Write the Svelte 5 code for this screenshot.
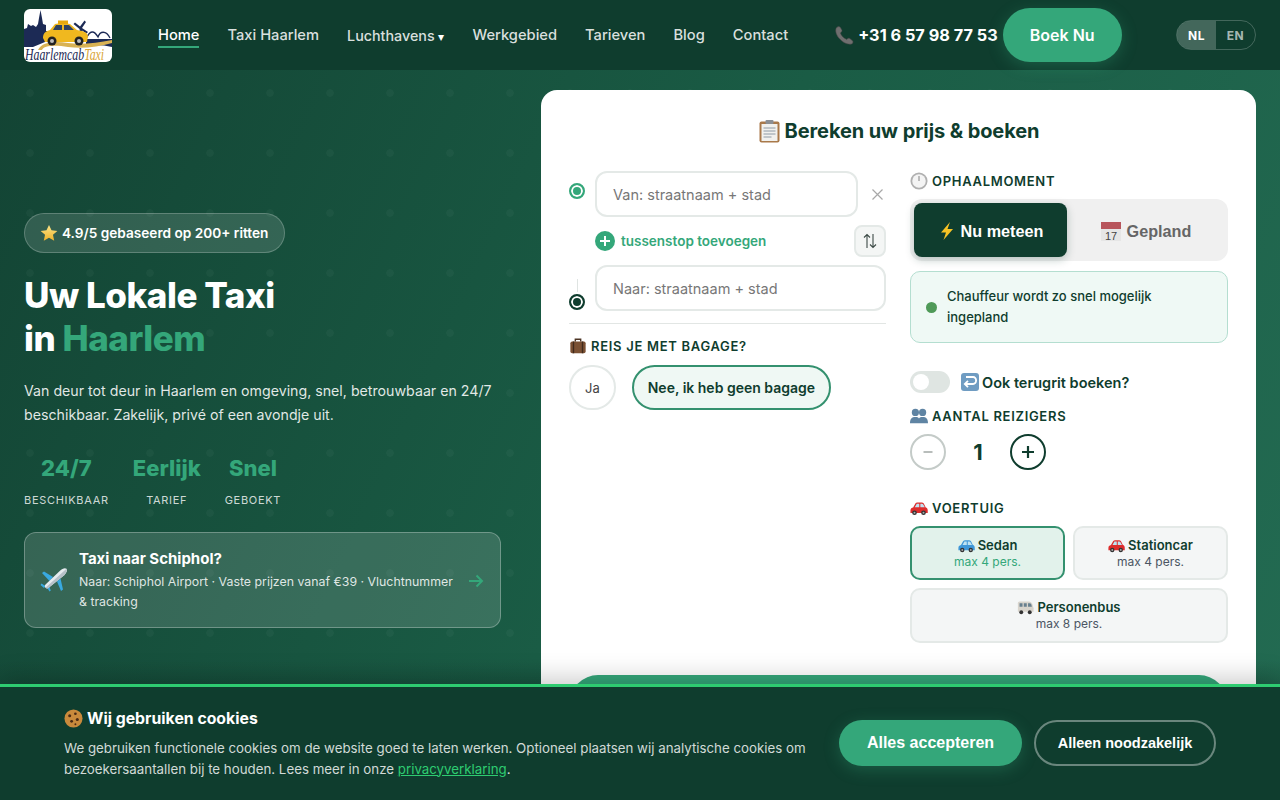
<script>
  const navLinks = ['Taxi Haarlem'];
  const navRest = ['Werkgebied', 'Tarieven', 'Blog', 'Contact'];
  const stats = [
    { value: '24/7', label: 'Beschikbaar' },
    { value: 'Eerlijk', label: 'Tarief' },
    { value: 'Snel', label: 'Geboekt' }
  ];
</script>

{#snippet carIcon(color, size = 18)}
  <svg class="emoji" width={size} height={size} viewBox="0 0 20 20">
    <path d="M.5 13c0-2 1-3 3-3.500L6 5c.5-.8 1.500-1.200 2.500-1.200h4.500c1 0 1.800.4 2.300 1.200L17.500 9.500c1.500.4 2.200 1.500 2.200 3v3H.5z" fill={color} />
    <path d="M7.500 5.300h2.800v4H5.300zM11.500 5.300h1.800c.5 0 .9.200 1.200.6l2 3.400h-5z" fill="#bfe3f2" />
    <circle cx="5" cy="15.300" r="2.600" fill="#333" /><circle cx="5" cy="15.300" r="1.100" fill="#aaa" />
    <circle cx="15" cy="15.300" r="2.600" fill="#333" /><circle cx="15" cy="15.300" r="1.100" fill="#aaa" />
  </svg>
{/snippet}

<div class="page">
  <header class="nav">
    <a class="logo" href="#home" aria-label="HaarlemcabTaxi">
      <svg width="88" height="53" viewBox="0 0 88 53">
        <rect width="88" height="53" fill="#fff" />
        <path d="M0 38V20l3-1 1-4 3 2 2-1 3 2 2-3 1-6 1.500-8L18 9l1 6 3 1v6h5v6l-6 5-12 5z" fill="#1c2a55" />
        <path d="M56.500 27l-1-7-6-5 1.500-1.500 5 4 4.500-6 1.500 1.500-4 6 6 4-1.500 1.500-4.500-3 1 6z" fill="#1c2a55" />
        <path d="M62 30c4-9 8-9 12-2 2-6 8-7 12 1" fill="none" stroke="#1c2a55" stroke-width="1.300" />
        <path d="M62 30h26v8c-8-2-18-3-26-1z" fill="#1c2a55" />
        <path d="M14 41c4-8 16-9 30-7 14 2 28 0 44-3v3c-14 4-30 6-44 4-12-2-24-2-26 3z" fill="#d9b253" />
        <path d="M19 29c0-5 3-7 7-8l5-6c3-1 12-1 15 0l7 6c6 1 10 2 11 6l-1 6H21z" fill="#f0b81f" />
        <path d="M32 16h6v5h-9zM40 16h5l5 5H40z" fill="#30425f" />
        <rect x="34" y="11.500" width="10" height="3.500" fill="#e9a90d" />
        <circle cx="28" cy="32" r="4.500" fill="#222" /><circle cx="28" cy="32" r="2" fill="#bbb" />
        <circle cx="55" cy="32" r="4.500" fill="#222" /><circle cx="55" cy="32" r="2" fill="#bbb" />
        <text transform="translate(1 51) scale(.74 1)" class="logo-a">Haarlemcab<tspan class="logo-b">Taxi</tspan></text>
      </svg>
    </a>
    <nav class="links">
      <a class="active" href="#home">Home</a>
      {#each navLinks as link}<a href="#l">{link}</a>{/each}
      <a class="drop" href="#d">Luchthavens <span class="caret">▾</span></a>
      {#each navRest as link}<a href="#l">{link}</a>{/each}
    </nav>
    <a class="phone" href="#tel">
      <svg class="emoji" width="21" height="21" viewBox="0 0 20 20">
        <path d="M2 3c1-1.500 3-2 4-.8l1.500 2.500c.4.800 0 1.600-.6 2.100l-.8.700c.8 2.500 3 5 6 6.200l1-.8c.6-.5 1.400-.5 2 0l2.500 2c1 1 .5 2.500-.8 3.200-4 1-8.600-1.600-11.800-5.300C2.500 10 .8 6 2 3z" fill="#6f6f6f" stroke="#444" stroke-width=".5" />
      </svg>
      +31 6 57 98 77 53
    </a>
    <button class="book">Boek Nu</button>
    <div class="lang"><span class="on">NL</span><span>EN</span></div>
  </header>

  <main class="hero">
    <section class="intro">
      <div class="badge">
        <svg class="emoji" width="18" height="18" viewBox="0 0 20 20">
          <defs><linearGradient id="star" x1="0" y1="0" x2="0" y2="1"><stop offset="0" stop-color="#fbe58a" /><stop offset="1" stop-color="#eeb32b" /></linearGradient></defs>
          <path d="M10 1l2.800 6 6.500.7-4.900 4.300 1.400 6.500L10 15.200 4.200 18.500l1.400-6.500L.7 7.700 7.200 7z" fill="url(#star)" />
        </svg>
        4.9/5 gebaseerd op 200+ ritten
      </div>
      <h1>Uw Lokale Taxi<br />in <em>Haarlem</em></h1>
      <p class="lead">Van deur tot deur in Haarlem en omgeving, snel, betrouwbaar en 24/7 beschikbaar. Zakelijk, privé of een avondje uit.</p>
      <div class="stats">
        {#each stats as stat}
          <div class="stat">
            <strong>{stat.value}</strong>
            <span>{stat.label}</span>
          </div>
        {/each}
      </div>
      <a class="promo" href="#schiphol">
        <svg class="plane" width="28" height="28" viewBox="0 0 28 28">
          <path d="M13 10 4 4.500 2 6l7.500 8zM17 14.500l4 9.500 2-1.500-2.500-11z" fill="#39a9e0" />
          <path d="M5.500 19 1.500 16.500.5 18l3.500 3zM7 20.500l2.500 4 1.300-1-2-5z" fill="#39a9e0" />
          <path d="M26.500 1.800c-1.500-1.300-4.500 0-6.500 2L5.500 17.500c-1 1-.8 2.500 0 3.300s2.200 1 3.200 0L24.500 8c2-2 3.200-4.800 2-6.200z" fill="#e6ebef" />
          <path d="M26.500 1.800c.8 1.300-.4 4.300-2 6.200L8.700 20.800c-1 1-2.400.8-3.200 0z" fill="#b6c0c8" />
        </svg>
        <div class="promo-text">
          <strong>Taxi naar Schiphol?</strong>
          <span>Naar: Schiphol Airport · Vaste prijzen vanaf €39 · Vluchtnummer &amp; tracking</span>
        </div>
        <svg class="arrow" width="16" height="16" viewBox="0 0 16 16"><path d="M1 8h13M8.500 2.500 14 8l-5.500 5.500" fill="none" stroke="#34a77a" stroke-width="2" /></svg>
      </a>
    </section>

    <section class="card">
      <h2>
        <svg class="emoji title-ico" width="23" height="24" viewBox="0 0 22 24">
          <rect x="1" y="2.500" width="20" height="21" rx="2" fill="#a9794a" />
          <rect x="3" y="5" width="16" height="17" fill="#f1f1ee" />
          <path d="M5 9h12M5 12h12M5 15h12M5 18h8" stroke="#8e9aa5" stroke-width="1" />
          <rect x="7" y="1" width="8" height="4" rx="1" fill="#8b8f94" />
        </svg>
        Bereken uw prijs &amp; boeken
      </h2>
      <div class="columns">
        <div class="col-left">
          <div class="route">
            <span class="pin start"></span>
            <input placeholder="Van: straatnaam + stad" />
            <button class="clear" aria-label="Wissen">
              <svg width="11" height="11" viewBox="0 0 11 11"><path d="M.5.500l10 10M10.500.500l-10 10" stroke="#a8a8a8" stroke-width="1.200" /></svg>
            </button>
          </div>
          <div class="route-mid">
            <span class="plus">
              <svg width="12" height="12" viewBox="0 0 12 12"><path d="M6 1v10M1 6h10" stroke="#fff" stroke-width="2" /></svg>
            </span>
            <span class="stop">tussenstop toevoegen</span>
            <button class="swap" aria-label="Omdraaien">
              <svg width="14" height="16" viewBox="0 0 14 16"><path d="M4 15V1.500M1 4.500l3-3 3 3M10 1v13.500M7 11.500l3 3 3-3" fill="none" stroke="#3c4a46" stroke-width="1.100" /></svg>
            </button>
          </div>
          <div class="route end">
            <span class="pin-wrap"><i></i><span class="pin finish"></span></span>
            <input placeholder="Naar: straatnaam + stad" />
          </div>
          <hr />
          <div class="label bag">
            <svg class="emoji" width="18" height="18" viewBox="0 0 20 20">
              <rect x="1.500" y="5" width="17" height="13" rx="2" fill="#7a5033" />
              <path d="M7 5V2.500h6V5" fill="none" stroke="#4c3424" stroke-width="1.500" />
              <path d="M5 5v13M15 5v13" stroke="#3f2a1c" stroke-width="1.500" />
            </svg>
            Reis je met bagage?
          </div>
          <div class="bag-options">
            <button class="opt">Ja</button>
            <button class="opt chosen">Nee, ik heb geen bagage</button>
          </div>
        </div>

        <div class="col-right">
          <div class="label">
            <svg class="emoji" width="18" height="18" viewBox="0 0 20 20">
              <circle cx="10" cy="10" r="9.500" fill="#b0b0b0" /><circle cx="10" cy="10" r="7.500" fill="#f4f4f4" />
              <path d="M10 4.500V10" stroke="#777" stroke-width="1" />
            </svg>
            Ophaalmoment
          </div>
          <div class="tabs">
            <button class="tab current">
              <svg class="emoji" width="18" height="20" viewBox="0 0 18 20"><path d="M12 1 3 11.500h5L5.500 19 15 8H9.500z" fill="#f7c325" /></svg>
              Nu meteen
            </button>
            <button class="tab">
              <svg class="emoji cal" width="22" height="22" viewBox="0 0 22 22">
                <rect x="1" y="2" width="20" height="19" fill="#e6e6e6" />
                <rect x="1" y="2" width="20" height="7" fill="#b8555c" />
                <text x="11" y="19.500" class="cal-n">17</text>
              </svg>
              Gepland
            </button>
          </div>
          <div class="notice">
            <span class="dot"></span>
            <span>Chauffeur wordt zo snel mogelijk ingepland</span>
          </div>
          <div class="return">
            <span class="switch"><b></b></span>
            <svg class="emoji" width="20" height="20" viewBox="0 0 20 20">
              <rect x="1" y="1" width="18" height="18" rx="3" fill="#6f9cc2" />
              <path d="M6 5h7a3 3 0 0 1 3 3.500A3 3 0 0 1 13 12H5M8 8.800 4.800 12 8 15.200" fill="none" stroke="#fff" stroke-width="1.800" />
            </svg>
            <span class="return-text">Ook terugrit boeken?</span>
          </div>
          <div class="label people">
            <svg class="emoji" width="18" height="18" viewBox="0 0 20 20">
              <g fill="#5f84a3"><circle cx="6" cy="6" r="4" /><circle cx="14" cy="6" r="4" /><path d="M0 18c0-5 2-7 6-7s5 2 5 7zM9 18c0-5 1-7 5-7s6 2 6 7z" /></g>
            </svg>
            Aantal reizigers
          </div>
          <div class="stepper">
            <button class="step off"><svg width="12" height="12" viewBox="0 0 12 12"><path d="M1.500 6h9" stroke="#b8bdbb" stroke-width="2" /></svg></button>
            <span class="count">1</span>
            <button class="step"><svg width="14" height="14" viewBox="0 0 14 14"><path d="M7 1v12M1 7h12" stroke="#0f3d2e" stroke-width="2.200" /></svg></button>
          </div>
          <div class="label vehicle-label">
            {@render carIcon('#dd2c2c')}
            Voertuig
          </div>
          <div class="vehicles">
            <button class="vehicle picked">
              <span class="v-name">{@render carIcon('#3f97d8', 17)} Sedan</span>
              <small>max 4 pers.</small>
            </button>
            <button class="vehicle">
              <span class="v-name">{@render carIcon('#dd2c2c', 17)} Stationcar</span>
              <small>max 4 pers.</small>
            </button>
            <button class="vehicle wide">
              <span class="v-name">
                <svg class="emoji" width="17" height="17" viewBox="0 0 20 20">
                  <path d="M1 5c0-1 1-2 2-2h11c2 0 3 1 4 3l1.500 5v4H1z" fill="#d8d4cc" />
                  <path d="M3 5h3.500v4H3zM8 5h3.500v4H8zM13 5h2c1 0 2 1 2 2l.5 2H13z" fill="#68808f" />
                  <circle cx="5" cy="15.500" r="2.300" fill="#333" /><circle cx="15" cy="15.500" r="2.300" fill="#333" />
                </svg>
                Personenbus
              </span>
              <small>max 8 pers.</small>
            </button>
          </div>
        </div>
      </div>
      <button class="submit">Bereken prijs</button>
    </section>
  </main>

  <aside class="cookies">
    <div class="cookie-text">
      <h3>
        <svg class="emoji" width="19" height="19" viewBox="0 0 20 20">
          <circle cx="10" cy="10" r="9.500" fill="#c98a3c" />
          <g fill="#4a2a14"><circle cx="6" cy="7" r="1.600" /><circle cx="12" cy="5" r="1.400" /><circle cx="14" cy="11" r="1.600" /><circle cx="8" cy="13" r="1.500" /><circle cx="12" cy="16" r="1" /></g>
        </svg>
        Wij gebruiken cookies
      </h3>
      <p>We gebruiken functionele cookies om de website goed te laten werken. Optioneel plaatsen wij analytische cookies om bezoekersaantallen bij te houden. Lees meer in onze <a href="#privacy">privacyverklaring</a>.</p>
    </div>
    <div class="cookie-actions">
      <button class="accept">Alles accepteren</button>
      <button class="necessary">Alleen noodzakelijk</button>
    </div>
  </aside>
</div>

<style>
  :global(body) {
    overflow: hidden;
    background: #0f3d2e;
  }

  .page {
    position: relative;
    height: 800px;
    overflow: hidden;
    font-family: Inter, "Liberation Sans", sans-serif;
    color: #0f3d2e;
  }
  button {
    font-family: inherit;
    cursor: pointer;
    padding: 0;
  }
  a {
    text-decoration: none;
    color: inherit;
  }
  .emoji {
    flex: none;
    vertical-align: -3px;
  }

  /* top bar */
  .nav {
    height: 70px;
    box-sizing: border-box;
    display: flex;
    align-items: center;
    padding: 0 24px;
    background: #0f3d2e;
  }
  .logo {
    display: block;
    width: 88px;
    height: 53px;
    border-radius: 6px;
    overflow: hidden;
    margin-right: 46px;
  }
  .logo svg {
    display: block;
  }
  .logo-a {
    font: italic 400 16px "Liberation Serif", serif;
    fill: #1c2a55;
  }
  .logo-b {
    fill: #d9a537;
  }
  .links {
    display: flex;
    align-items: center;
    gap: 28px;
    font-size: 14.700px;
    font-weight: 500;
    color: rgba(255, 255, 255, .85);
    height: 26px;
  }
  .links a {
    display: block;
    line-height: 22px;
    padding-top: 2px;
    border-bottom: 2px solid transparent;
    white-space: nowrap;
  }
  .links .active {
    color: #fff;
    border-bottom-color: #34a77a;
  }
  .links .drop {
    margin-top: 2px;
    font-size: 14.300px;
  }
  .caret {
    font-size: 12px;
    color: #fff;
  }
  .phone {
    margin-left: 46px;
    display: flex;
    align-items: center;
    gap: 3px;
    font-size: 16.300px;
    font-weight: 700;
    color: #fff;
    white-space: nowrap;
  }
  .book {
    margin-left: 5px;
    width: 119px;
    height: 54px;
    border: 0;
    border-radius: 27px;
    background: #34a77a;
    color: #fff;
    font-size: 16px;
    font-weight: 600;
    box-shadow: 0 4px 16px rgba(52, 167, 122, .3);
  }
  .lang {
    margin-left: auto;
    display: flex;
    width: 80px;
    height: 30px;
    box-sizing: border-box;
    border: 1px solid rgba(255, 255, 255, .22);
    border-radius: 15px;
    overflow: hidden;
    font-size: 12px;
    font-weight: 700;
    letter-spacing: .6px;
    color: rgba(255, 255, 255, .65);
  }
  .lang span {
    flex: 1;
    display: flex;
    align-items: center;
    justify-content: center;
  }
  .lang .on {
    background: rgba(255, 255, 255, .22);
    color: #fff;
  }

  /* hero */
  .hero {
    height: 730px;
    box-sizing: border-box;
    padding: 20px 24px 0;
    display: grid;
    grid-template-columns: 477px 715px;
    column-gap: 40px;
    background:
      radial-gradient(circle, rgba(255, 255, 255, .03) 3.500px, transparent 4px) 0 -7px / 60px 60px,
      linear-gradient(180deg, transparent 590px, rgba(15, 61, 46, .45) 640px),
      linear-gradient(115deg, #134434 0%, #1a5c45 50%, #236b52 100%);
  }
  .intro {
    height: 660px;
    display: flex;
    flex-direction: column;
    justify-content: center;
    align-items: flex-start;
    color: #fff;
  }
  .badge {
    height: 40px;
    box-sizing: border-box;
    display: flex;
    align-items: center;
    gap: 4px;
    padding: 0 16px 0 15px;
    border: 1px solid rgba(255, 255, 255, .22);
    border-radius: 20px;
    background: rgba(255, 255, 255, .13);
    font-size: 13.650px;
    font-weight: 600;
  }
  h1 {
    margin: 21px 0 0;
    font-size: 35px;
    line-height: 43px;
    font-weight: 800;
    letter-spacing: -.45px;
  }
  h1 em {
    font-style: normal;
    color: #34a77a;
  }
  .lead {
    margin: 19px 0 0;
    font-size: 14.200px;
    line-height: 24px;
    color: rgba(255, 255, 255, .88);
  }
  .stats {
    display: flex;
    gap: 24px;
    margin-top: 27px;
  }
  .stat {
    display: flex;
    flex-direction: column;
    align-items: center;
  }
  .stat strong {
    font-size: 22px;
    line-height: 28px;
    font-weight: 800;
    color: #34a77a;
  }
  .stat span {
    margin-top: 11px;
    font-size: 11px;
    line-height: 14px;
    letter-spacing: .7px;
    text-transform: uppercase;
    color: rgba(255, 255, 255, .8);
  }
  .promo {
    margin-top: 25px;
    width: 477px;
    height: 96px;
    box-sizing: border-box;
    display: flex;
    align-items: center;
    gap: 11px;
    padding: 2px 16px 0 15px;
    border: 1px solid rgba(255, 255, 255, .28);
    border-radius: 12px;
    background: rgba(255, 255, 255, .14);
  }
  .plane {
    flex: none;
  }
  .promo-text {
    flex: 1;
    display: flex;
    flex-direction: column;
  }
  .promo-text strong {
    font-size: 15px;
    line-height: 20px;
    font-weight: 700;
    margin-bottom: 3px;
  }
  .promo-text span {
    font-size: 12.350px;
    line-height: 20px;
    color: rgba(255, 255, 255, .85);
  }
  .arrow {
    flex: none;
  }

  /* booking card */
  .card {
    height: 700px;
    box-sizing: border-box;
    padding: 28px 28px 0;
    border-radius: 16px;
    background: #fff;
  }
  h2 {
    margin: 0;
    height: 26px;
    display: flex;
    align-items: center;
    justify-content: center;
    gap: 4px;
    font-size: 20px;
    font-weight: 700;
    letter-spacing: -.1px;
  }
  .columns {
    margin-top: 27px;
    display: grid;
    grid-template-columns: 317px 318px;
    column-gap: 24px;
  }
  .route {
    display: flex;
    align-items: flex-start;
    gap: 10px;
  }
  .route input {
    flex: 1;
    min-width: 0;
    height: 46px;
    box-sizing: border-box;
    padding: 0 16px;
    border: 2px solid #e4e9e7;
    border-radius: 12px;
    font: 14.500px Inter, sans-serif;
    outline: none;
  }
  .route input::placeholder {
    color: #777;
  }
  .pin {
    flex: none;
    display: block;
    box-sizing: border-box;
    width: 16px;
    height: 16px;
    border-radius: 50%;
    border: 2.500px solid #34a77a;
    background: #34a77a;
    box-shadow: inset 0 0 0 2px #fff;
    margin-top: 12px;
  }
  .pin.finish {
    margin-top: 0;
    border-color: #0f3d2e;
    background: #0f3d2e;
  }
  .pin-wrap {
    flex: none;
    display: flex;
    flex-direction: column;
    align-items: center;
    width: 16px;
    padding-top: 14px;
  }
  .pin-wrap i {
    display: block;
    width: 1px;
    height: 13px;
    background: #dfe4e2;
    margin-bottom: 2px;
  }
  .clear {
    flex: none;
    width: 18px;
    height: 46px;
    margin-right: 0;
    border: 0;
    background: none;
    display: flex;
    align-items: center;
    justify-content: center;
  }
  .route-mid {
    height: 32px;
    margin: 8px 0;
    padding-left: 26px;
    display: flex;
    align-items: center;
  }
  .plus {
    width: 20px;
    height: 20px;
    border-radius: 50%;
    background: #34a77a;
    display: flex;
    align-items: center;
    justify-content: center;
  }
  .stop {
    margin-left: 6px;
    font-size: 13.500px;
    font-weight: 600;
    color: #34a77a;
  }
  .swap {
    margin-left: auto;
    width: 32px;
    height: 32px;
    border: 2px solid #e4e9e7;
    border-radius: 8px;
    background: #f4f6f5;
    display: flex;
    align-items: center;
    justify-content: center;
  }
  hr {
    margin: 12px 0 0;
    border: 0;
    border-top: 1px solid #e2e6e4;
  }
  .label {
    display: flex;
    align-items: center;
    gap: 4px;
    height: 20px;
    font-size: 13px;
    font-weight: 600;
    letter-spacing: .7px;
    text-transform: uppercase;
    color: #0f3d2e;
  }
  .bag {
    margin-top: 12px;
  }
  .bag-options {
    margin-top: 9px;
    display: flex;
    gap: 16px;
  }
  .opt {
    height: 45px;
    padding: 0 14px;
    border: 2px solid #e4e9e7;
    border-radius: 23px;
    background: #fff;
    color: #444;
    font-size: 13px;
    font-weight: 400;
  }
  .opt.chosen {
    border-color: #34916f;
    background: #eff8f4;
    color: #0f3d2e;
    font-size: 14px;
    font-weight: 600;
  }
  .tabs {
    margin-top: 8px;
    display: grid;
    grid-template-columns: 153px 1fr;
    height: 62px;
    box-sizing: border-box;
    padding: 4px;
    border-radius: 12px;
    background: #f0f0f0;
  }
  .tab {
    display: flex;
    align-items: center;
    justify-content: center;
    gap: 5px;
    padding-top: 2px;
    border: 0;
    border-radius: 8px;
    background: none;
    color: #666;
    font: 700 16.200px "Liberation Sans", sans-serif;
  }
  .tab.current {
    background: #0f3d2e;
    color: #fff;
    box-shadow: 0 3px 8px rgba(15, 61, 46, .25);
  }
  .cal-n {
    font: 400 11px "Liberation Sans", sans-serif;
    text-anchor: middle;
    fill: #444;
  }
  .notice {
    margin-top: 10px;
    height: 72px;
    box-sizing: border-box;
    display: flex;
    align-items: center;
    gap: 10px;
    padding: 0 15px;
    border: 1px solid #b4ded0;
    border-radius: 10px;
    background: #eff9f5;
    font-size: 13px;
    line-height: 21px;
    font-weight: 500;
  }
  .dot {
    flex: none;
    width: 11px;
    height: 11px;
    border-radius: 50%;
    background: #4f9a58;
  }
  .return {
    margin-top: 28px;
    height: 22px;
    display: flex;
    align-items: center;
    gap: 10px;
  }
  .return svg {
    margin-right: -8px;
  }
  .return-text {
    font-size: 14.500px;
    font-weight: 600;
  }
  .switch {
    width: 40px;
    height: 22px;
    box-sizing: border-box;
    padding: 3px;
    border-radius: 11px;
    background: #dfe5e2;
  }
  .switch b {
    display: block;
    width: 16px;
    height: 16px;
    border-radius: 50%;
    background: #fff;
  }
  .people {
    margin-top: 13px;
  }
  .stepper {
    margin-top: 8px;
    display: flex;
    align-items: center;
  }
  .step {
    width: 36px;
    height: 36px;
    border: 2px solid #0f3d2e;
    border-radius: 50%;
    background: #fff;
    display: flex;
    align-items: center;
    justify-content: center;
  }
  .step.off {
    border-color: #c4cbc8;
  }
  .count {
    width: 64px;
    text-align: center;
    font-size: 22px;
    font-weight: 700;
  }
  .vehicle-label {
    margin-top: 28px;
  }
  .vehicles {
    margin-top: 8px;
    display: grid;
    grid-template-columns: 155px 155px;
    column-gap: 8px;
    row-gap: 8px;
  }
  .vehicle {
    height: 54px;
    box-sizing: border-box;
    display: flex;
    flex-direction: column;
    align-items: center;
    justify-content: center;
    border: 2px solid #e4e9e7;
    border-radius: 10px;
    background: #f4f6f6;
    color: #0f3d2e;
  }
  .vehicle.wide {
    grid-column: 1 / 3;
    height: 55px;
  }
  .vehicle.picked {
    border-color: #34916f;
    background: #e2f2eb;
  }
  .v-name {
    display: flex;
    align-items: center;
    gap: 3px;
    font-size: 13px;
    line-height: 17px;
    font-weight: 600;
  }
  .vehicle small {
    font-size: 12px;
    line-height: 16px;
    color: #4b5563;
  }
  .vehicle.picked small {
    color: #34a77a;
  }
  .submit {
    display: block;
    margin: 32px 1px 0;
    width: 657px;
    height: 56px;
    border: 0;
    border-radius: 28px;
    background: #34a77a;
    color: #fff;
    font-size: 16px;
    font-weight: 700;
  }

  /* cookie banner */
  .cookies {
    position: absolute;
    left: 0;
    right: 0;
    bottom: 0;
    height: 116px;
    box-sizing: border-box;
    padding: 0 64px;
    display: flex;
    align-items: center;
    gap: 28px;
    border-top: 3px solid #2ecc71;
    background: #0f3d2e;
    box-shadow: 0 -6px 24px rgba(0, 0, 0, .2);
  }
  .cookie-text {
    flex: 1;
    min-width: 0;
    padding-top: 1px;
    color: rgba(255, 255, 255, .82);
  }
  .cookies h3 {
    margin: 0 0 9px;
    display: flex;
    align-items: center;
    gap: 4px;
    font-size: 15.800px;
    line-height: 20px;
    font-weight: 700;
    color: #fff;
  }
  .cookies p {
    margin: 0;
    font-size: 13.300px;
    line-height: 21px;
  }
  .cookies p a {
    color: #2ecc71;
    text-decoration: underline;
  }
  .cookie-actions {
    flex: none;
    display: flex;
    gap: 12px;
    margin-bottom: 1px;
  }
  .cookie-actions button {
    height: 46px;
    border-radius: 23px;
    color: #fff;
    font-family: "Liberation Sans", sans-serif;
    font-weight: 700;
  }
  .accept {
    width: 183px;
    border: 0;
    background: #34a77a;
    font-size: 16px;
    box-shadow: 0 4px 16px rgba(52, 167, 122, .3);
  }
  .necessary {
    width: 182px;
    border: 2px solid rgba(255, 255, 255, .38);
    background: transparent;
    font-size: 14.500px;
  }
</style>
